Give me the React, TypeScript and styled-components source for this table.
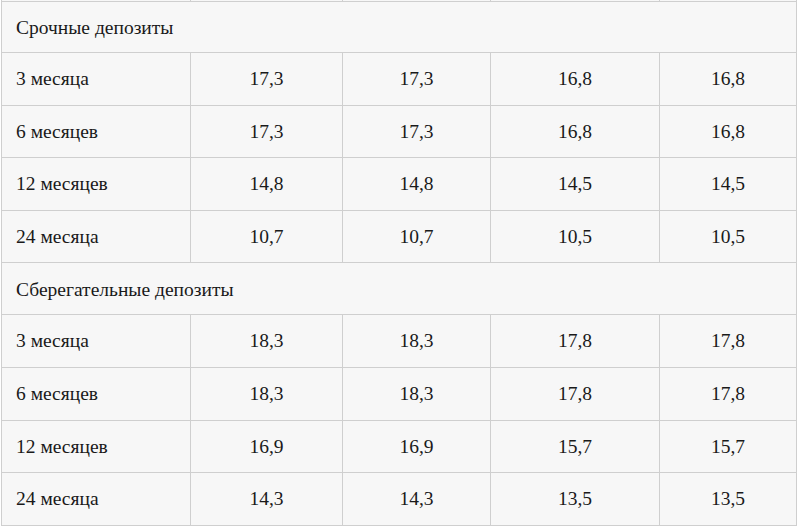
import styled, { createGlobalStyle } from 'styled-components';

const GlobalStyle = createGlobalStyle`
  html, body {
    margin: 0;
    padding: 0;
    background: #ffffff;
  }
`;

const Frame = styled.div`
  width: 800px;
  height: 528px;
  overflow: hidden;
  padding-left: 1px;
  box-sizing: border-box;
`;

const Table = styled.table`
  width: 795px;
  margin-top: -40px;
  border-collapse: collapse;
  table-layout: fixed;
  background: #f7f7f7;
`;

const Row = styled.tr<{ $h: number }>`
  height: ${(p) => p.$h}px;
`;

const Cell = styled.td<{ $first?: boolean }>`
  border: 1px solid #cfcfcf;
  padding: 0 14px;
  font-family: 'Liberation Serif', 'Times New Roman', serif;
  font-size: 19.5px;
  color: #1a1a1a;
  text-align: ${(p) => (p.$first ? 'left' : 'center')};
  vertical-align: middle;
  white-space: nowrap;
`;

const Section = styled(Cell)`
  padding-top: 2px;
`;

const widths = [189, 152, 148, 169, 137];

type Group = { title: string; rows: [string, string, string, string, string][] };

const groups: Group[] = [
  {
    title: 'Срочные депозиты',
    rows: [
      ['3 месяца', '17,3', '17,3', '16,8', '16,8'],
      ['6 месяцев', '17,3', '17,3', '16,8', '16,8'],
      ['12 месяцев', '14,8', '14,8', '14,5', '14,5'],
      ['24 месяца', '10,7', '10,7', '10,5', '10,5'],
    ],
  },
  {
    title: 'Сберегательные депозиты',
    rows: [
      ['3 месяца', '18,3', '18,3', '17,8', '17,8'],
      ['6 месяцев', '18,3', '18,3', '17,8', '17,8'],
      ['12 месяцев', '16,9', '16,9', '15,7', '15,7'],
      ['24 месяца', '14,3', '14,3', '13,5', '13,5'],
    ],
  },
];

// heights picked so the grid lines land where the screenshot has them
const heights = [51, 53, 52, 53, 52, 52, 53, 53, 52, 53];

export default function App() {
  let i = 0;
  return (
    <Frame>
      <GlobalStyle />
      <Table>
        <colgroup>
          {widths.map((w, k) => (
            <col key={k} style={{ width: w }} />
          ))}
        </colgroup>
        <tbody>
          {/* tail of the row above, cut off by the frame */}
          <Row $h={41}>
            {widths.map((_, k) => (
              <Cell key={k} $first={k === 0} />
            ))}
          </Row>
          {groups.map((g) => {
            const out = [
              <Row key={g.title} $h={heights[i++]}>
                <Section colSpan={5} $first>
                  {g.title}
                </Section>
              </Row>,
            ];
            g.rows.forEach((r) => {
              out.push(
                <Row key={g.title + r[0]} $h={heights[i++]}>
                  {r.map((v, k) => (
                    <Cell key={k} $first={k === 0}>
                      {v}
                    </Cell>
                  ))}
                </Row>
              );
            });
            return out;
          })}
        </tbody>
      </Table>
    </Frame>
  );
}
